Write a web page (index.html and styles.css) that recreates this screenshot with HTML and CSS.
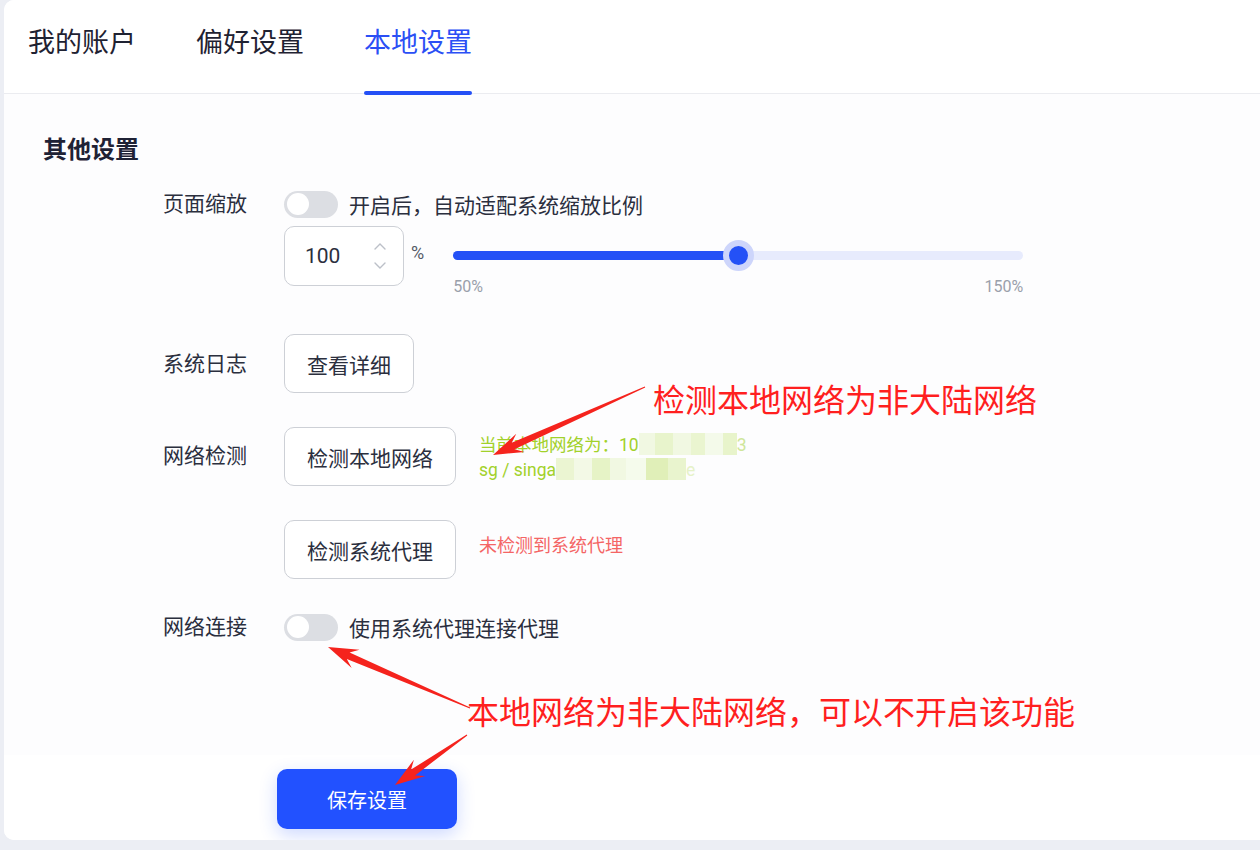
FILE: index.html
```html
<!DOCTYPE html>
<html lang="zh-CN">
<head>
    <meta charset="UTF-8">
    <meta name="viewport" content="width=device-width, initial-scale=1.0">
    <title>本地设置</title>
    <link rel="stylesheet" href="styles.css">
</head>
<body>
    <div class="page">
        <div class="card">
            <div class="tabs">
                <div class="tab">我的账户</div>
                <div class="tab">偏好设置</div>
                <div class="tab active">本地设置</div>
            </div>

            <div class="content">
                <h3 class="section-title">其他设置</h3>
                <div class="form">
                    <div class="field">
                        <div class="label">页面缩放</div>
                        <div class="control">
                            <div class="inline">
                                <span class="switch"><span class="knob"></span></span>
                                <span class="switch-text">开启后，自动适配系统缩放比例</span>
                            </div>
                            <div class="zoom-row">
                                <div class="number-box">
                                    <span class="number-value">100</span>
                                    <span class="spinner">
                                        <svg width="14" height="8" viewBox="0 0 14 8"><path d="M2 7 L7 2 L12 7" fill="none" stroke="#bcc0c8" stroke-width="1.4" stroke-linecap="round"/></svg>
                                        <svg width="14" height="8" viewBox="0 0 14 8"><path d="M2 1 L7 6 L12 1" fill="none" stroke="#bcc0c8" stroke-width="1.4" stroke-linecap="round"/></svg>
                                    </span>
                                </div>
                                <span class="unit">%</span>
                                <div class="slider">
                                    <div class="track">
                                        <div class="fill" style="width: 50%"></div>
                                        <div class="thumb" style="left: 50%"></div>
                                    </div>
                                    <div class="slider-marks">
                                        <span>50%</span>
                                        <span>150%</span>
                                    </div>
                                </div>
                            </div>
                        </div>
                    </div>

                    <div class="field center gap-log">
                        <div class="label">系统日志</div>
                        <button class="btn">查看详细</button>
                    </div>

                    <div class="field gap-btn">
                        <div class="label label-btn">网络检测</div>
                        <button class="btn">检测本地网络</button>
                        <div class="status ok">
                            <div>当前本地网络为：10<span class="mosaic m1"></span><span class="faded">3</span></div>
                            <div>sg / singa<span class="mosaic m2"></span><span class="faded light">e</span></div>
                        </div>
                    </div>

                    <div class="field gap-btn">
                        <div class="label"></div>
                        <button class="btn">检测系统代理</button>
                        <div class="status err">未检测到系统代理</div>
                    </div>

                    <div class="field center gap-net">
                        <div class="label">网络连接</div>
                        <div class="inline">
                            <span class="switch"><span class="knob"></span></span>
                            <span class="switch-text">使用系统代理连接代理</span>
                        </div>
                    </div>
                </div>
            </div>

            <div class="footer">
                <button class="btn-primary">保存设置</button>
            </div>
        </div>

        <!-- 标注 -->
        <div class="note note-1">检测本地网络为非大陆网络</div>
        <div class="note note-2">本地网络为非大陆网络，可以不开启该功能</div>
        <svg class="arrows" width="1260" height="850" viewBox="0 0 1260 850">
            <polygon points="644.8,386.5 511.7,442.8 516.3,433.7 493,455 524.5,451.9 514.5,449.2 645.2,387.5" />
            <polygon points="470.2,707.5 349.6,652.5 359.5,649.7 328,647 351.7,668.1 346.8,658.9 469.8,708.5" />
            <polygon points="466.7,734.6 411.1,769.6 413.9,759.7 395,785 425.3,776.1 415.1,775.4 467.3,735.4" />
        </svg>
    </div>
</body>
</html>
```

FILE: styles.css
```css
body {
    margin: 0;
    background-color: #eceef4;
    font-family: Roboto, "Noto Sans CJK SC", sans-serif;
    color: #2b2f3e;
}
.page {
    position: relative;
    width: 1260px;
    height: 850px;
    overflow: hidden;
}
.card {
    margin-left: 4px;
    width: 1256px;
    height: 840px;
    background-color: #fff;
    border-radius: 10px 0 0 10px;
    display: flex;
    flex-direction: column;
    overflow: hidden;
}

/* 标签栏 */
.tabs {
    height: 93px;
    border-bottom: 1px solid #ebecf0;
    display: flex;
    gap: 60px;
    padding-left: 24px;
    background-color: #fff;
}
.tab {
    position: relative;
    font-size: 27px;
    line-height: 86px;
    color: #1f2232;
}
.tab.active {
    color: #2b4ff5;
}
.tab.active::after {
    content: "";
    position: absolute;
    left: 0;
    right: 0;
    top: 91px;
    height: 4px;
    border-radius: 2px;
    background-color: #2450f6;
}

.content {
    flex: 1;
    background-color: #fdfdfe;
    padding: 41px 0 0 39px;
}
.section-title {
    margin: 0;
    font-size: 24px;
    line-height: 30px;
    font-weight: bold;
    color: #1f2235;
}
.form {
    margin: 24px 0 0 120px;
}
.field {
    display: flex;
    align-items: flex-start;
}
.field.center {
    align-items: center;
}
.gap-log {
    margin-top: 37px;
}
.gap-btn {
    margin-top: 34px;
}
.gap-net {
    margin-top: 33px;
}
.label {
    width: 121px;
    flex-shrink: 0;
    font-size: 21px;
    line-height: 30px;
    color: #2b2f3e;
}
.label-btn {
    margin-top: 14px;
}
.inline {
    display: flex;
    align-items: center;
    height: 30px;
}
.switch {
    position: relative;
    width: 54px;
    height: 27px;
    border-radius: 14px;
    background-color: #dcdee3;
    flex-shrink: 0;
}
.knob {
    position: absolute;
    left: 3px;
    top: 2.5px;
    width: 22px;
    height: 22px;
    border-radius: 50%;
    background-color: #fff;
}
.switch-text {
    margin-left: 11px;
    font-size: 21px;
    color: #2b2f3e;
}

/* 缩放 */
.zoom-row {
    display: flex;
    align-items: flex-start;
    margin-top: 7px;
}
.number-box {
    box-sizing: border-box;
    width: 120px;
    height: 60px;
    border: 1.5px solid #cdd0d6;
    border-radius: 10px;
    background-color: #fff;
    display: flex;
    align-items: center;
    padding-left: 20px;
}
.number-value {
    font-size: 21px;
    color: #2b2f3e;
    flex: 1;
}
.spinner {
    display: flex;
    flex-direction: column;
    gap: 12px;
    margin-right: 16px;
}
.spinner svg {
    display: block;
}
.unit {
    margin-left: 7px;
    margin-top: 16px;
    font-size: 18px;
    color: #555a66;
}
.slider {
    margin-left: 29px;
    width: 570px;
    padding-top: 25px;
}
.track {
    position: relative;
    height: 9px;
    border-radius: 5px;
    background-color: #e7ebfd;
}
.fill {
    height: 100%;
    border-radius: 5px;
    background-color: #2451f6;
}
.thumb {
    position: absolute;
    top: 50%;
    width: 19px;
    height: 19px;
    margin: -15.5px 0 0 -15.5px;
    border-radius: 50%;
    background-color: #2451f6;
    border: 6px solid #cdd5fb;
}
.slider-marks {
    display: flex;
    justify-content: space-between;
    margin-top: 17px;
    font-size: 16px;
    line-height: 20px;
    color: #9aa0ab;
}

/* 按钮 */
.btn {
    height: 59px;
    padding: 0 22px;
    border: 1.5px solid #cdd0d6;
    border-radius: 10px;
    background-color: #fff;
    font-family: inherit;
    font-size: 21px;
    color: #2b2f3e;
}
.status {
    margin-left: 23px;
    font-size: 17.5px;
    line-height: 25px;
}
.status.ok {
    margin-top: 6px;
    color: #a2d12b;
}
.status.err {
    margin-top: 13px;
    font-size: 18px;
    color: #f46565;
}
.mosaic {
    display: inline-block;
    height: 22px;
    vertical-align: -4px;
}
.m1 {
    width: 98px;
    background: linear-gradient(90deg, #f1f8e2 0 16px, #e8f4cc 16px 34px, #f1f8e2 34px 52px, #eaf5d0 52px 66px, #f4faea 66px 84px, #e8f4cb 84px 98px);
}
.m2 {
    width: 130px;
    background: linear-gradient(90deg, #ebf5d2 0 18px, #f3f9e6 18px 36px, #e6f3c6 36px 54px, #f1f8e2 54px 70px, #f5fbec 70px 90px, #e0efb8 90px 112px, #e9f4ce 112px 130px);
}
.faded {
    color: #cfe69a;
}
.faded.light {
    color: #e6f2c8;
}

/* 底部 */
.footer {
    height: 85px;
    box-sizing: border-box;
    padding: 14px 0 0 273px;
    background-color: #fff;
}
.btn-primary {
    width: 180px;
    height: 60px;
    border: none;
    border-radius: 10px;
    background-color: #2251ff;
    color: #fff;
    font-family: inherit;
    font-size: 20px;
    box-shadow: 0 6px 18px rgba(34, 81, 255, 0.22);
}

/* 标注 */
.note {
    position: absolute;
    font-family: "Noto Sans CJK SC", sans-serif;
    font-size: 32px;
    line-height: 40px;
    color: #ff1f1f;
}
.note-1 {
    left: 653px;
    top: 378px;
}
.note-2 {
    left: 467px;
    top: 690px;
}
.arrows {
    position: absolute;
    left: 0;
    top: 0;
    pointer-events: none;
}
.arrows polygon {
    fill: #f5231d;
}
```
